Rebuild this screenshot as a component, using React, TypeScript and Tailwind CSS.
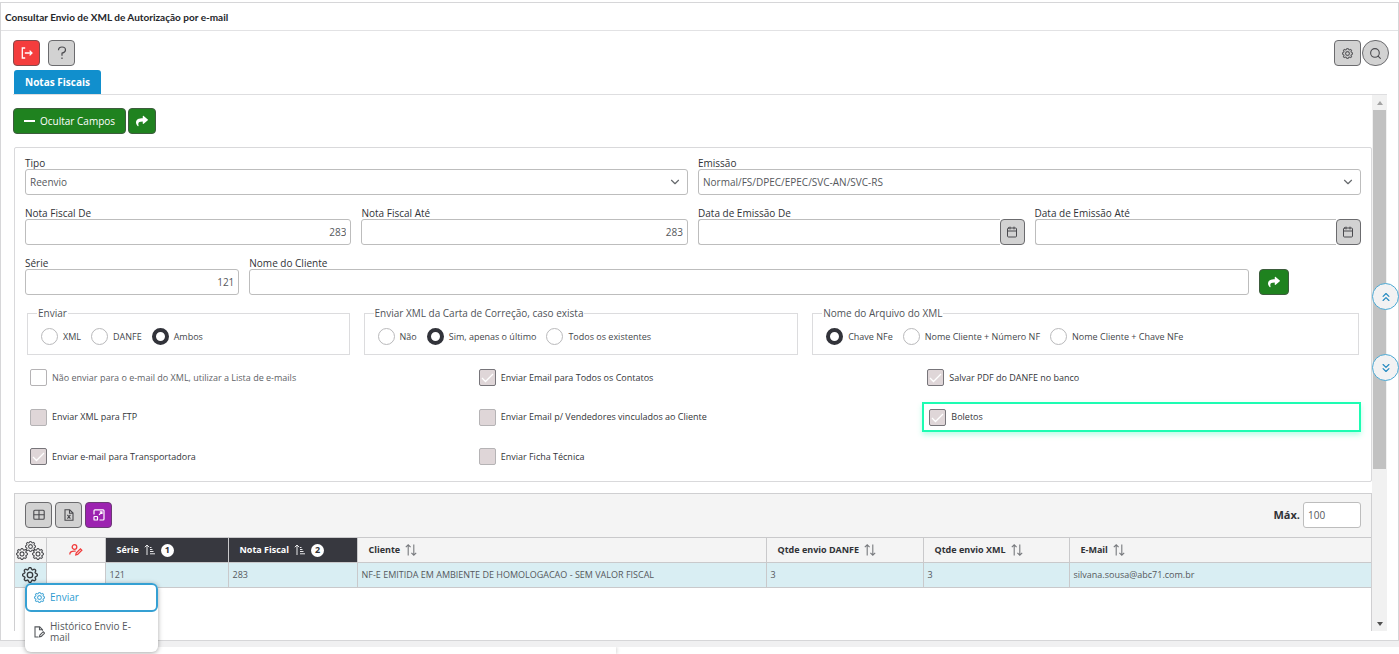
import React from "react";
import { FaShare } from "react-icons/fa";
import { BsGear } from "react-icons/bs";
import { Calendar, ChevronDown, ChevronsDown, ChevronsUp, Search } from "lucide-react";

const gray =
  "flex h-[26px] w-[27px] shrink-0 items-center justify-center rounded-[4px] border border-[#6b6b6e] bg-[#d2d2d2] text-[#4a4a4e]";
const green =
  "flex h-[26px] items-center justify-center rounded-[4px] border border-[#3d5c3d] bg-[#1f821f] text-white";
const box =
  "block h-[26px] w-full min-w-0 rounded-[3px] border border-[#bdbdbd] bg-white text-[10px] text-[#55585c] outline-none";

function Field({ id, label, span, children }: { id: string; label: string; span: string; children: React.ReactNode }) {
  return (
    <div className={span}>
      <label htmlFor={id} className="block h-4 text-[10px] leading-5 text-[#303236]">
        {label}
      </label>
      {children}
    </div>
  );
}

function SelectField({ id, label, value }: { id: string; label: string; value: string }) {
  return (
    <Field id={id} label={label} span="col-span-6">
      <div className="relative">
        <select id={id} className={box + " appearance-none px-1"}>
          <option>{value}</option>
        </select>
        <ChevronDown className="pointer-events-none absolute top-1.5 right-1.5 text-[#66696d]" size={14} strokeWidth={2} />
      </div>
    </Field>
  );
}

function DateField({ id, label }: { id: string; label: string }) {
  return (
    <Field id={id} label={label} span="col-span-3">
      <div className="flex">
        <input id={id} className={box + " rounded-r-none border-r-0 px-1"} />
        <button aria-label={"Calendário " + label} className="flex h-[26px] w-[25px] shrink-0 items-center justify-center rounded-[4px] border border-[#6b6b6e] bg-[#d2d2d2] text-[#4a4a4e]">
          <Calendar size={12} strokeWidth={2} />
        </button>
      </div>
    </Field>
  );
}

function RadioGroup({ legend, name, options, selected, span }: { legend: string; name: string; options: string[]; selected: number; span: string }) {
  return (
    <fieldset className={"mx-0.5 h-[49px] border border-[#dcdcde] pl-[13px] " + span}>
      <legend className="-ml-1 px-px text-[10px] leading-[14px] text-[#505358]">{legend}</legend>
      <div className="flex gap-2.5 pt-2">
        {options.map((o, i) => (
          <label key={o} className="flex items-center gap-[5px] text-[9px] leading-4 text-[#44474b]">
            <input
              type="radio"
              name={name}
              defaultChecked={i === selected}
              className="size-[17px] appearance-none rounded-full border border-[#b9b9bb] bg-white checked:border-4 checked:border-[#32333a]"
            />
            {o}
          </label>
        ))}
      </div>
    </fieldset>
  );
}

function Check({ label, kind, light }: { label: string; kind: "open" | "off" | "on"; light?: boolean }) {
  return (
    <label className={"flex items-center gap-[5px] text-[9px] leading-4 " + (light ? "text-[#606367]" : "text-[#34363a]")}>
      <span className="relative size-[17px]">
        <input
          type="checkbox"
          disabled={kind !== "open"}
          defaultChecked={kind === "on"}
          className="block size-[17px] appearance-none rounded-[2px] border border-[#b5b3b5] bg-white checked:border-[#77757a] disabled:bg-[#dfd6d8]"
        />
        {kind === "on" && (
          <svg viewBox="0 0 17 17" className="pointer-events-none absolute inset-0" fill="none" stroke="#fff" strokeWidth="1.3">
            <path d="M3 9l3.5 3.5L14 5" />
          </svg>
        )}
      </span>
      {label}
    </label>
  );
}

function SortBoth() {
  return (
    <svg width="12" height="12" viewBox="0 0 12 12" fill="none" stroke="#77797d" strokeWidth="1.1">
      <path d="M3.2 11.5V1M.8 3.2L3.2.8l2.4 2.4M8.8.5V11M6.4 8.8l2.4 2.4 2.4-2.4" />
    </svg>
  );
}

function SortUp() {
  return (
    <svg width="12" height="12" viewBox="0 0 12 12" fill="none" stroke="#e8e8ea" strokeWidth="1">
      <path d="M3 11V1.2M.8 3.2L3 1l2.2 2.2M6 3.5h1.5M6 5.5h2.5M6 7.5h3.5M6 9.8h5" />
    </svg>
  );
}

function UserEdit() {
  return (
    <svg width="14" height="12" viewBox="0 0 14 12" fill="none" stroke="#f13c3c" strokeWidth="1.3">
      <circle cx="5.5" cy="3" r="2.3" />
      <path d="M.8 10.5c0-2.5 1.6-3.4 4.3-3.4h1.6M6.8 10.9l.4-1.8 4.2-4.2 1.4 1.4-4.2 4.2z" />
    </svg>
  );
}

const head = "border border-[#c9c9cb] text-left text-[9px] font-bold";
const cell = "border border-[#c9c9cb] px-1 text-[9px] text-[#55585c]";

export default function App() {
  return (
    <div className="flex min-h-screen flex-col bg-white pt-0.5 font-['Open_Sans','Noto_Sans',sans-serif] text-[#303236]">
      <main className="relative flex flex-1 flex-col border border-[#d6d6d8]">
        <h1 className="h-7 border-b border-[#e2e2e4] pl-1 font-['Lato',sans-serif] text-[10px] leading-[29px] font-bold text-[#24262a]">
          Consultar Envio de XML de Autorização por e-mail
        </h1>
        <div className="flex flex-1 flex-col pt-[9px] pr-[11px] pb-[9px] pl-3">
          <div className="-mr-0.5 flex items-center">
            <button aria-label="Sair" className="flex h-[26px] w-[27px] items-center justify-center rounded-[4px] border border-[#85494b] bg-[#f43d3d] text-white">
              <svg width="12" height="12" viewBox="0 0 12 12" fill="none" stroke="currentColor" strokeWidth="1.3">
                <path d="M4.2 1H1.3v10h2.9M3.8 6H11M8.6 3.6L11 6 8.6 8.4" />
              </svg>
            </button>
            <button aria-label="Ajuda" className={gray + " ml-2"}>
              <svg width="10" height="14" viewBox="0 0 10 14" fill="none" stroke="currentColor" strokeWidth="1.2">
                <path d="M1.5 4.2C1.5 2 3 1 5 1s3.500 1.100 3.500 3S7 6.700 5 7.200V9.800M5 11.600v1.500" />
              </svg>
            </button>
            <button aria-label="Configurações" className={gray + " ml-auto"}>
              <BsGear size={11} strokeWidth={0.4} />
            </button>
            <button aria-label="Pesquisar" className={gray + " ml-px rounded-full"}>
              <Search size={13} strokeWidth={2} />
            </button>
          </div>
          <nav className="mt-1 flex border-b border-[#dedee0]">
            <a href="#notas" className="ml-px h-6 rounded-t-[3px] bg-[#118fcd] px-[11px] text-[10px] leading-[25px] font-bold text-white">
              Notas Fiscais
            </a>
          </nav>

          <div className="flex flex-1">
            <div className="flex min-w-0 flex-1 flex-col">
              <div className="flex gap-0.5 pt-[13px]">
                <button className={green + " gap-[5px] px-2.5 text-[10px]"}>
                  <span className="h-[2px] w-[11px] bg-white" />
                  Ocultar Campos
                </button>
                <button aria-label="Avançar" className={green + " w-7"}>
                  <FaShare size={12} />
                </button>
              </div>

              <form className="mt-[13px] ml-px rounded-[2px] border border-[#d9d9db] px-2.5 pt-[5px] pb-4" onSubmit={(e) => e.preventDefault()}>
                <div className="grid grid-cols-12 gap-x-[10px] gap-y-2">
                  <SelectField id="tipo" label="Tipo" value="Reenvio" />
                  <SelectField id="emissao" label="Emissão" value="Normal/FS/DPEC/EPEC/SVC-AN/SVC-RS" />
                  <Field id="nfde" label="Nota Fiscal De" span="col-span-3">
                    <input id="nfde" defaultValue="283" className={box + " px-1 text-right"} />
                  </Field>
                  <Field id="nfate" label="Nota Fiscal Até" span="col-span-3">
                    <input id="nfate" defaultValue="283" className={box + " px-1 text-right"} />
                  </Field>
                  <DateField id="dde" label="Data de Emissão De" />
                  <DateField id="date" label="Data de Emissão Até" />
                  <Field id="serie" label="Série" span="col-span-2">
                    <input id="serie" defaultValue="121" className={box + " px-1 text-right"} />
                  </Field>
                  <Field id="cliente" label="Nome do Cliente" span="col-span-9">
                    <input id="cliente" className={box + " px-1"} />
                  </Field>
                  <div className="flex items-end">
                    <button aria-label="Buscar" className={green + " w-[30px]"}>
                      <FaShare size={12} />
                    </button>
                  </div>
                </div>

                <div className="mt-[11px] grid grid-cols-12 gap-x-[10px]">
                  <RadioGroup legend="Enviar" name="enviar" options={["XML", "DANFE", "Ambos"]} selected={2} span="col-span-3" />
                  <RadioGroup
                    legend="Enviar XML da Carta de Correção, caso exista"
                    name="carta"
                    options={["Não", "Sim, apenas o último", "Todos os existentes"]}
                    selected={1}
                    span="col-span-4"
                  />
                  <RadioGroup
                    legend="Nome do Arquivo do XML"
                    name="arquivo"
                    options={["Chave NFe", "Nome Cliente + Número NF", "Nome Cliente + Chave NFe"]}
                    selected={0}
                    span="col-span-5"
                  />
                </div>

                <div className="mt-[14px] grid grid-cols-3 items-center gap-x-[10px] gap-y-4">
                  <div className="pl-[5px]"><Check kind="open" light label="Não enviar para o e-mail do XML, utilizar a Lista de e-mails" /></div>
                  <div className="pl-[5px]"><Check kind="on" label="Enviar Email para Todos os Contatos" /></div>
                  <div className="pl-[5px]"><Check kind="on" label="Salvar PDF do DANFE no banco" /></div>
                  <div className="pl-[5px]"><Check kind="off" label="Enviar XML para FTP" /></div>
                  <div className="pl-[5px]"><Check kind="off" label="Enviar Email p/ Vendedores vinculados ao Cliente" /></div>
                  <div className="flex h-[30px] items-center border-2 border-[#1dfcb2] pl-[5px] shadow-[0_3px_5px_rgba(29,252,178,0.3)]">
                    <Check kind="on" label="Boletos" />
                  </div>
                  <div className="pl-[5px]"><Check kind="on" label="Enviar e-mail para Transportadora" /></div>
                  <div className="pl-[5px]"><Check kind="off" label="Enviar Ficha Técnica" /></div>
                </div>
              </form>

              <section className="mt-[11px] ml-px flex-1 border border-[#cfcfd1] border-b-0">
                <div className="flex h-[43px] items-center gap-[3px] bg-[#f4f4f4] px-2.5 pb-px">
                  <button aria-label="Colunas" className={gray}>
                    <svg width="12" height="12" viewBox="0 0 12 12" fill="none" stroke="currentColor" strokeWidth="1.1">
                      <rect x=".8" y="1.300" width="10.400" height="9" rx="1" />
                      <path d="M.8 5.800h10.400M6 1.300v9" />
                    </svg>
                  </button>
                  <button aria-label="Exportar planilha" className={gray}>
                    <svg width="12" height="12" viewBox="0 0 12 12" fill="none" stroke="currentColor" strokeWidth="1.1">
                      <path d="M2 .8h4.700L10 4v7.200H2zM6.500 1v3.200H10M4.400 5.800l3 3.800M7.400 5.800l-3 3.800" />
                    </svg>
                  </button>
                  <button aria-label="Expandir" className="flex h-[26px] w-[27px] items-center justify-center rounded-[4px] border border-[#6b3a74] bg-[#9c22b0] text-white">
                    <svg width="12" height="12" viewBox="0 0 12 12" fill="none" stroke="currentColor" strokeWidth="1.2">
                      <path d="M1 5.500V1.700q0-.900.900-.900h8.200q.900 0 .900.900v8.400q0 .900-.900.900H6.500M6 5.800l3-3M6.800 2.800H9V5" />
                      <rect x="1" y="7.500" width="3.500" height="3.500" rx=".6" />
                    </svg>
                  </button>
                  <label htmlFor="max" className="ml-auto text-[11px] font-bold">Máx.</label>
                  <div className="w-[58px]">
                    <input id="max" defaultValue="100" className={box + " px-1"} />
                  </div>
                </div>
                <table className="w-full table-fixed border-collapse">
                  <colgroup>
                    <col className="w-[31px]" />
                    <col className="w-[59px]" />
                    <col className="w-[123px]" />
                    <col className="w-[129px]" />
                    <col />
                    <col className="w-[157px]" />
                    <col className="w-[146px]" />
                    <col className="w-[302px]" />
                  </colgroup>
                  <thead>
                    <tr className="h-[25px] bg-[#f4f4f4]">
                      <th className={head + " border-l-0"}>
                        <span className="flex flex-col items-center">
                          <BsGear size={11} strokeWidth={0.3} />
                          <span className="-mt-1 flex gap-1">
                            <BsGear size={12} strokeWidth={0.3} />
                            <BsGear size={12} strokeWidth={0.3} />
                          </span>
                        </span>
                      </th>
                      <th className={head}>
                        <span className="flex justify-center"><UserEdit /></span>
                      </th>
                      {["Série", "Nota Fiscal"].map((t, i) => (
                        <th key={t} className={head + " bg-[#37383f] pl-[11px] text-white"}>
                          <span className="flex items-center gap-[5px]">
                            {t}
                            <SortUp />
                            <span className="flex size-[13px] items-center justify-center rounded-full bg-white text-[9px] text-[#303236]">{i + 1}</span>
                          </span>
                        </th>
                      ))}
                      {["Cliente", "Qtde envio DANFE", "Qtde envio XML", "E-Mail"].map((t) => (
                        <th key={t} className={head + " border-r-0 pl-[11px]"}>
                          <span className="flex items-center gap-[5px]">
                            {t}
                            <SortBoth />
                          </span>
                        </th>
                      ))}
                    </tr>
                  </thead>
                  <tbody>
                    <tr className="h-[25px] bg-[#d9eef3]">
                      <td className="border border-l-0 border-[#c9c9cb]">
                        <div className="relative flex justify-center">
                          <button aria-label="Ações"><BsGear size={16} className="block" strokeWidth={0.3} /></button>
                          <div className="absolute top-4 left-[10px] z-10 h-[69px] w-[133px] rounded-[6px] bg-white text-[10px] leading-[11px] shadow-[0_1px_5px_rgba(0,0,0,0.35)]">
                            <button className="flex h-[29px] w-full items-center gap-[5px] rounded-[6px] border-2 border-[#35a0d3] pl-[7px] text-[#2d9bd0]">
                              <BsGear size={11} strokeWidth={0.3} />
                              Enviar
                            </button>
                            <button className="flex h-[40px] w-full items-center gap-[5px] pr-5 pl-[9px] text-left text-[#55585c]">
                              <svg className="shrink-0" width="11" height="12" viewBox="0 0 11 12" fill="none" stroke="currentColor" strokeWidth="1.1">
                                <path d="M4.500 11H1V.900h4.700L8.500 3.700v1M5.500 1v2.800h2.800M5.500 10.800l.4-1.800 3.300-3.300 1.400 1.400-3.300 3.300z" />
                              </svg>
                              Histórico Envio E-mail
                            </button>
                          </div>
                        </div>
                      </td>
                      <td className={cell + " bg-white"} />
                      <td className={cell}>121</td>
                      <td className={cell}>283</td>
                      <td className={cell}>NF-E EMITIDA EM AMBIENTE DE HOMOLOGACAO - SEM VALOR FISCAL</td>
                      <td className={cell}>3</td>
                      <td className={cell}>3</td>
                      <td className={cell + " border-r-0"}>silvana.sousa@abc71.com.br</td>
                    </tr>
                  </tbody>
                </table>
              </section>
            </div>

            <div className="flex w-[15px] shrink-0 flex-col bg-[#f1f1f1]">
              <span className="flex h-[15px] items-center justify-center">
                <span className="border-x-[3px] border-b-[4px] border-x-transparent border-b-[#a3a3a3]" />
              </span>
              <div className="flex-1">
                <div className="mx-px h-[71%] bg-[#c1c1c1]" />
              </div>
              <span className="flex h-[15px] items-center justify-center">
                <span className="border-x-[3px] border-t-[4px] border-x-transparent border-t-[#505050]" />
              </span>
            </div>
          </div>
        </div>

        <div className="absolute top-[280px] -right-px z-10 flex flex-col gap-11">
          <button aria-label="Ir para o topo" className="flex size-[27px] items-center justify-center rounded-full border border-[#4ba9d4] bg-[#f2f2f3] text-[#2389c0]">
            <ChevronsUp size={14} />
          </button>
          <button aria-label="Ir para o fim" className="flex size-[27px] items-center justify-center rounded-full border border-[#4ba9d4] bg-[#f2f2f3] text-[#2389c0]">
            <ChevronsDown size={14} />
          </button>
        </div>
      </main>
      <footer className="h-[13px] bg-[#f0f0f1] pt-1.5">
        <div className="h-[7px] overflow-hidden bg-white">
          <div className="h-[7px] w-[44%] shadow-[0_0_4px_rgba(0,0,0,0.25)]" />
        </div>
      </footer>
    </div>
  );
}
